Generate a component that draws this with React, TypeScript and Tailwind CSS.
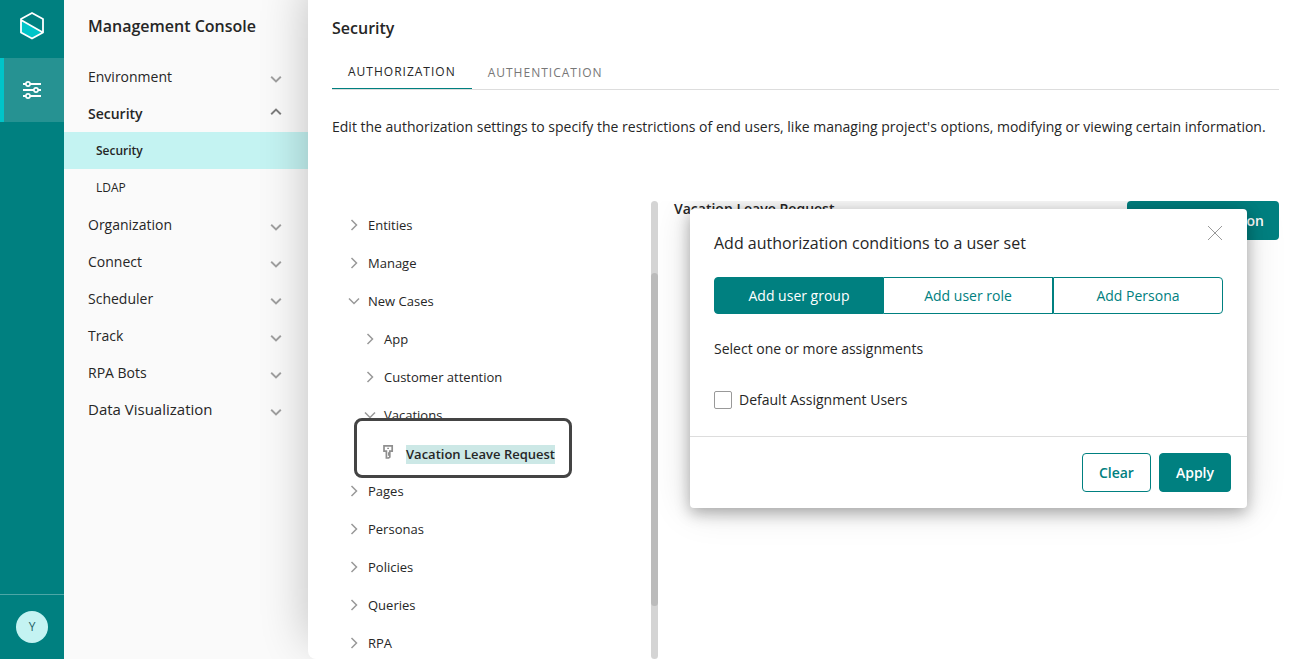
import { useState } from "react";
import clsx from "clsx";

interface MenuItem {
  label: string;
  children?: string[];
  large?: boolean;
}

interface TreeNode {
  label: string;
  depth: 0 | 1 | 2;
  state: "open" | "closed" | "leaf";
}

const MENU: MenuItem[] = [
  { label: "Environment" },
  { label: "Security", children: ["Security", "LDAP"] },
  { label: "Organization" },
  { label: "Connect" },
  { label: "Scheduler" },
  { label: "Track" },
  { label: "RPA Bots" },
  { label: "Data Visualization", large: true },
];

const TREE: TreeNode[] = [
  { label: "Entities", depth: 0, state: "closed" },
  { label: "Manage", depth: 0, state: "closed" },
  { label: "New Cases", depth: 0, state: "open" },
  { label: "App", depth: 1, state: "closed" },
  { label: "Customer attention", depth: 1, state: "closed" },
  { label: "Vacations", depth: 1, state: "open" },
  { label: "Vacation Leave Request", depth: 2, state: "leaf" },
  { label: "Pages", depth: 0, state: "closed" },
  { label: "Personas", depth: 0, state: "closed" },
  { label: "Policies", depth: 0, state: "closed" },
  { label: "Queries", depth: 0, state: "closed" },
  { label: "RPA", depth: 0, state: "closed" },
];

const ASSIGNMENT_TABS = ["Add user group", "Add user role", "Add Persona"];

const Logo = () => (
  <svg width="26" height="30" viewBox="0 0 26 30" fill="none" aria-hidden="true">
    <path d="M2 9 L24 21.5 L13 27.5 L2 21.5 Z" fill="#00c4c8" />
    <path
      d="M13 2 L24 8 V21.5 L13 27.5 L2 21.5 V8 Z M2 9 L24 21.5"
      stroke="#fff"
      strokeWidth="1.8"
      strokeLinejoin="round"
    />
  </svg>
);

const SlidersIcon = () => (
  <svg width="18" height="18" viewBox="0 0 18 18" fill="none" stroke="#fff" aria-hidden="true">
    <path
      d="M0 3h3M7 3h11M0 9h11M15 9h3M0 15h3M7 15h11"
      strokeWidth="2"
    />
    <g strokeWidth="1.6">
      <circle cx="5" cy="3" r="2.1" />
      <circle cx="13" cy="9" r="2.1" />
      <circle cx="5" cy="15" r="2.1" />
    </g>
  </svg>
);

const MenuChevron = ({ open }: { open: boolean }) => (
  <svg width="12" height="8" viewBox="0 0 12 8" fill="none" aria-hidden="true">
    <path
      d={open ? "M1.2 6.2 L6 1.5 L10.8 6.2" : "M1.2 1.8 L6 6.5 L10.8 1.8"}
      stroke={open ? "#7c7c7c" : "#a0a0a0"}
      strokeWidth="1.9"
    />
  </svg>
);

const TreeChevron = ({ open }: { open: boolean }) => (
  <svg width="16" height="16" viewBox="0 0 16 16" fill="none" aria-hidden="true">
    <path
      d={open ? "M3 4.5 L8 9.5 L13 4.5" : "M5.5 2 L10.5 7 L5.5 12"}
      stroke="#999"
      strokeWidth="1.5"
    />
  </svg>
);

const KeyIcon = () => (
  <svg width="16" height="20" viewBox="0 0 16 20" fill="none" stroke="#8f8f8f" aria-hidden="true">
    <path
      d="M4 1.8 H12.2 V7.2 H9.8 V9.2 H8.8 V10.8 H9.8 V13 L8.6 14 H6.4 V7.2 H4 Z"
      strokeWidth="1.7"
    />
    <path d="M7.2 4.4h1.8" strokeWidth="1.4" />
  </svg>
);

const Rail = () => (
  <div className="flex w-16 shrink-0 flex-col bg-[#008080]">
    <a href="#home" aria-label="Home" className="flex h-[58px] items-center justify-center pb-1.5">
      <Logo />
    </a>
    <button
      type="button"
      aria-label="Management Console"
      className="flex h-16 items-center justify-center border-l-4 border-[#00c4c8] bg-[#269292] pr-1"
    >
      <SlidersIcon />
    </button>
    <div className="mt-auto flex h-[65px] items-center justify-center border-t border-[#4da6a6]">
      <button
        type="button"
        aria-label="User profile"
        className="h-8 w-8 rounded-full bg-[#c4f3f2] text-xs text-[#1f5f66]"
      >
        Y
      </button>
    </div>
  </div>
);

const Sidebar = () => (
  <nav className="w-[244px] shrink-0 bg-[#fafafa]">
    <h1 className="flex h-[58px] items-center pb-1.5 pl-6 text-base font-semibold">
      Management Console
    </h1>
    <ul>
      {MENU.map(({ label, children, large }) => (
        <li key={label}>
          <button
            type="button"
            aria-expanded={Boolean(children)}
            className={clsx(
              "flex h-[37px] w-full items-center justify-between pl-6 pr-[26px]",
              large ? "text-[15px]" : "text-sm",
              children && "font-semibold",
            )}
          >
            {label}
            <span className={children ? "pb-1" : "pt-1"}>
              <MenuChevron open={Boolean(children)} />
            </span>
          </button>
          {children && (
            <ul>
              {children.map((child, index) => (
                <li key={child}>
                  <a
                    href={`#${child.toLowerCase()}`}
                    className={clsx(
                      "flex h-[37px] items-center pl-8 text-xs",
                      index === 0 && "bg-[#c4f3f2] font-semibold",
                    )}
                  >
                    {child}
                  </a>
                </li>
              ))}
            </ul>
          )}
        </li>
      ))}
    </ul>
  </nav>
);

const TreeRow = ({ node }: { node: TreeNode }) => {
  if (node.state === "leaf") {
    return (
      <li className="relative flex h-[38px] items-center pl-12">
        <div className="absolute -top-[17px] left-[22px] h-[60px] w-[218px] rounded-lg border-3 border-[#444] bg-white" />
        <button
          type="button"
          className="relative flex items-center gap-2.5 text-[13px] font-semibold"
        >
          <KeyIcon />
          <span className="bg-[#cce8e6] leading-[19px]">{node.label}</span>
        </button>
      </li>
    );
  }

  return (
    <li
      className={clsx(
        "flex h-[38px] items-center",
        node.depth === 0 ? "pl-3.5" : "pl-[30px]",
      )}
    >
      <button
        type="button"
        aria-expanded={node.state === "open"}
        className="flex items-center gap-1.5 text-[13px]"
      >
        <TreeChevron open={node.state === "open"} />
        {node.label}
      </button>
    </li>
  );
};

const AuthorizationDialog = () => {
  const [activeTab, setActiveTab] = useState(0);

  return (
    <div
      role="dialog"
      aria-labelledby="dialog-title"
      className="absolute left-8 right-8 top-2 rounded bg-white shadow-[0_5px_15px_rgba(0,0,0,0.3),0_0_40px_rgba(0,0,0,0.14)]"
    >
      <div className="flex items-start justify-between pl-6 pr-6 pt-[22px]">
        <h3 id="dialog-title" className="text-base">
          Add authorization conditions to a user set
        </h3>
        <button type="button" aria-label="Close" className="-mt-1.5 text-[#999]">
          <svg width="16" height="16" viewBox="0 0 16 16" stroke="currentColor" aria-hidden="true">
            <path d="M1 1 L15 15 M15 1 L1 15" strokeWidth="1" />
          </svg>
        </button>
      </div>
      <div className="mx-6 mt-[22px] flex h-[37px] text-sm text-[#008080]">
        {ASSIGNMENT_TABS.map((label, index) => (
          <button
            key={label}
            type="button"
            onClick={() => setActiveTab(index)}
            className={clsx(
              "flex-1 border border-[#008080] first:rounded-l last:rounded-r",
              index === 1 && "border-l-0",
              index === activeTab && "bg-[#008080] font-medium text-white",
            )}
          >
            {label}
          </button>
        ))}
      </div>
      <p className="mx-6 mt-[25px] text-sm">Select one or more assignments</p>
      <label className="mx-6 mb-[26px] mt-[31px] flex items-center gap-[7px] text-sm">
        <input
          type="checkbox"
          className="h-[18px] w-[18px] appearance-none rounded-xs border border-[#999] bg-white checked:bg-[#008080]"
        />
        Default Assignment Users
      </label>
      <div className="flex justify-end gap-2 border-t border-[#ddd] p-4 text-sm font-semibold">
        <button
          type="button"
          className="h-[39px] rounded border border-[#008080] px-4 text-[#008080]"
        >
          Clear
        </button>
        <button
          type="button"
          className="h-[39px] rounded border border-[#008080] bg-[#008080] px-4 text-white"
        >
          Apply
        </button>
      </div>
    </div>
  );
};

const App = () => {
  return (
    <div className="flex h-screen overflow-hidden bg-[#fafafa] font-['Open_Sans',sans-serif] text-[#262626]">
      <Rail />
      <Sidebar />
      <main className="relative flex min-w-0 flex-1 flex-col rounded-bl-lg bg-white pl-6 pr-[19px] pt-4 shadow-[0_-16px_48px_rgba(0,0,0,0.24)]">
        <h2 className="text-base font-semibold">Security</h2>
        <div role="tablist" className="mt-3.5 flex border-b border-[#ddd] text-xs">
          <button
            type="button"
            role="tab"
            aria-selected="true"
            className="h-[35px] border-b border-[#008080] px-4 pt-0.5 tracking-[1px]"
          >
            AUTHORIZATION
          </button>
          <button
            type="button"
            role="tab"
            aria-selected="false"
            className="h-[35px] px-4 pt-0.5 tracking-[1px] text-[#777]"
          >
            AUTHENTICATION
          </button>
        </div>
        <p className="mt-[27px] text-sm">
          Edit the authorization settings to specify the restrictions of end users, like managing
          project's options, modifying or viewing certain information.
        </p>
        <div className="mt-16 flex min-h-0 flex-1">
          <div className="flex w-[326px] shrink-0 justify-between">
            <ul className="-ml-2 min-w-0 flex-1 overflow-hidden pl-2 pt-1.5">
              {TREE.map((node) => (
                <TreeRow key={node.label} node={node} />
              ))}
            </ul>
            <div className="w-[7px] rounded bg-[#d4d4d4] pt-[72px]">
              <div className="h-[333px] rounded bg-[#bbb]" />
            </div>
          </div>
          <section className="relative -mr-[19px] flex-1 overflow-hidden pr-[19px]">
            <div className="flex justify-between pl-4">
              <h3 className="text-sm font-semibold leading-4">Vacation Leave Request</h3>
              <button
                type="button"
                className="h-[39px] w-[152px] whitespace-nowrap rounded bg-[#008080] text-sm font-semibold text-white"
              >
                Add authorization
              </button>
            </div>
            <div className="absolute inset-y-0 left-0 right-[19px]">
              <AuthorizationDialog />
            </div>
          </section>
        </div>
      </main>
    </div>
  );
};

export default App;
